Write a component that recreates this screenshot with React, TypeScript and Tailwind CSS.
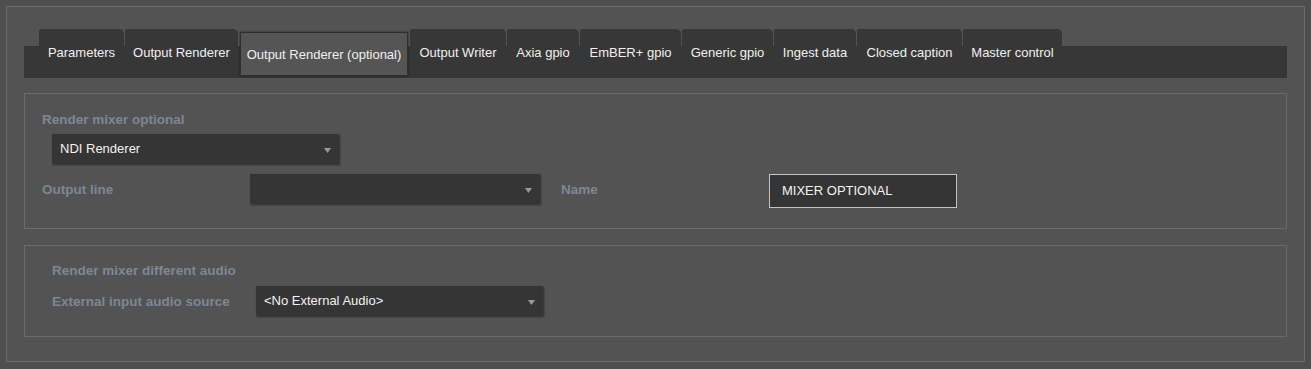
const tabs = [
  { label: 'Parameters', w: 'w-[85px]' },
  { label: 'Output Renderer', w: 'w-[113px]' },
  { label: 'Output Renderer (optional)', w: 'w-[168px]', active: true },
  { label: 'Output Writer', w: 'w-[96px]' },
  { label: 'Axia gpio', w: 'w-[72px]' },
  { label: 'EmBER+ gpio', w: 'w-[101px]' },
  { label: 'Generic gpio', w: 'w-[91px]' },
  { label: 'Ingest data', w: 'w-[82px]' },
  { label: 'Closed caption', w: 'w-[105px]' },
  { label: 'Master control', w: 'w-[99px]' },
]

function Arrow() {
  return (
    <svg width="7" height="5" viewBox="0 0 7 5" className="shrink-0 mt-[2px]">
      <path d="M0 0 L7 0 L3.5 5 Z" fill="#9a9a9a" />
    </svg>
  )
}

function Dropdown({ value, w }: { value?: string; w: string }) {
  return (
    <div
      className={`${w} h-[30px] bg-[#353535] shadow-[1px_1px_2px_rgba(0,0,0,0.45)] flex items-center pl-[8px] pr-[8px] text-[13px] text-[#f2f2f2]`}
    >
      <span className="flex-1 truncate">{value}</span>
      <Arrow />
    </div>
  )
}

function Label({ children, w }: { children: string; w?: string }) {
  return (
    <div className={`${w ?? ''} shrink-0 text-[13.5px] font-bold leading-[15px] text-[#7e8793]`}>
      {children}
    </div>
  )
}

export default function App() {
  return (
    <div
      className="w-[1311px] h-[369px] bg-[#4e4e4e] pt-[6px] pl-[6px]"
      style={{ fontFamily: '"Liberation Sans", Arial, sans-serif' }}
    >
      <div className="w-[1299px] h-[356px] border border-[#6b6b6b] bg-[#535353] px-[17px] pt-[22px]">
        {/* Tab bar */}
        <div className="h-[49px] flex items-end gap-px pl-[15px] bg-[linear-gradient(to_bottom,transparent_17px,#363636_17px)]">
          {tabs.map(t =>
            t.active ? (
              <div
                key={t.label}
                className={`${t.w} mx-px mb-[2px] h-[44px] pt-[2px] bg-[#555555] border border-[#2f2f2f] shadow-[0_0_2px_rgba(0,0,0,0.5)] flex items-center justify-center text-[13px] text-[#f0f0f0] whitespace-nowrap`}
              >
                {t.label}
              </div>
            ) : (
              <div
                key={t.label}
                className={`${t.w} h-[49px] pb-[2px] bg-[#373737] rounded-tr-[5px] rounded-tl-[2px] flex items-center justify-center text-[13px] text-[#f0f0f0] whitespace-nowrap`}
              >
                {t.label}
              </div>
            )
          )}
        </div>

        {/* Render mixer optional */}
        <div className="mt-[15px] h-[136px] border border-[#6a6a6a] pl-[17px] pt-[18px]">
          <Label>Render mixer optional</Label>
          <div className="mt-[7px] ml-[10px]">
            <Dropdown value="NDI Renderer" w="w-[287px]" />
          </div>
          <div className="mt-[10px] flex items-start">
            <div className="h-[30px] flex items-center">
              <Label w="w-[208px]">Output line</Label>
            </div>
            <Dropdown w="w-[290px]" />
            <div className="h-[30px] flex items-center ml-[21px]">
              <Label w="w-[208px]">Name</Label>
            </div>
            <div className="w-[188px] h-[34px] border border-[#c4c4c4] bg-[#353535] flex items-center pl-[12px] text-[13px] text-[#f2f2f2]">
              MIXER OPTIONAL
            </div>
          </div>
        </div>

        {/* Render mixer different audio */}
        <div className="mt-[16px] h-[92px] border border-[#6a6a6a] pl-[27px] pt-[17px]">
          <Label>Render mixer different audio</Label>
          <div className="mt-[8px] flex items-center">
            <Label w="w-[204px]">External input audio source</Label>
            <Dropdown value="<No External Audio>" w="w-[287px]" />
          </div>
        </div>
      </div>
    </div>
  )
}
